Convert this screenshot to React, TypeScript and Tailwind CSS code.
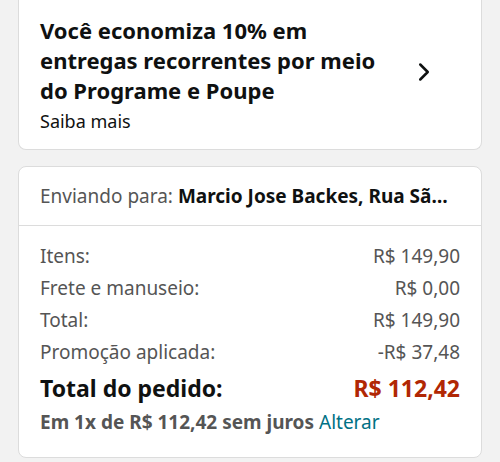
import { ChevronRight } from "lucide-react";

const rows = [
  { label: "Itens:", value: "R$ 149,90" },
  { label: "Frete e manuseio:", value: "R$ 0,00" },
  { label: "Total:", value: "R$ 149,90" },
  { label: "Promoção aplicada:", value: "-R$ 37,48" },
];

export default function App() {
  return (
    <div
      className="min-h-[462px] w-[500px] overflow-hidden bg-[#f2f2f2] px-[18px] text-[#0f1111]"
      style={{ fontFamily: "'Noto Sans', sans-serif" }}
    >
      <div className="flex items-center rounded-b-lg border border-t-0 border-[#dcdcdc] bg-white pb-[15px] pl-[21px] pr-[42px] pt-[15px]">
        <div className="flex-1">
          <h2 className="text-[22px] font-bold leading-[30px]">
            Você economiza 10% em
            <br />
            entregas recorrentes por meio
            <br />
            do Programe e Poupe
          </h2>
          <p className="mt-[3px] text-[18px] leading-[26px]">Saiba mais</p>
        </div>
        <ChevronRight className="mb-[6px] h-[30px] w-[30px]" strokeWidth={2} />
      </div>

      <div className="mt-[16px] rounded-lg border border-[#dcdcdc] bg-white">
        <div className="whitespace-nowrap border-b border-[#dcdcdc] px-[21px] pb-[16px] pt-[16px] text-[19px] leading-[26px] text-[#555]">
          Enviando para: <span className="font-bold text-[#0f1111]">Marcio Jose Backes, Rua Sã…</span>
        </div>
        <div className="px-[21px] pb-[20px] pt-[14px] text-[19px] text-[#555]">
          {rows.map((r) => (
            <div key={r.label} className="flex justify-between leading-[32px]">
              <span>{r.label}</span>
              <span>{r.value}</span>
            </div>
          ))}
          <div className="mt-[3px] flex justify-between text-[23px] font-bold leading-[34px] text-[#0f1111]">
            <span>Total do pedido:</span>
            <span className="text-[#b12704]">R$ 112,42</span>
          </div>
          <p className="mt-[2px] text-[19px] font-bold leading-[30px] text-[#555]">
            Em 1x de R$ 112,42 sem juros <span className="font-normal text-[#007185]">Alterar</span>
          </p>
        </div>
      </div>
    </div>
  );
}
